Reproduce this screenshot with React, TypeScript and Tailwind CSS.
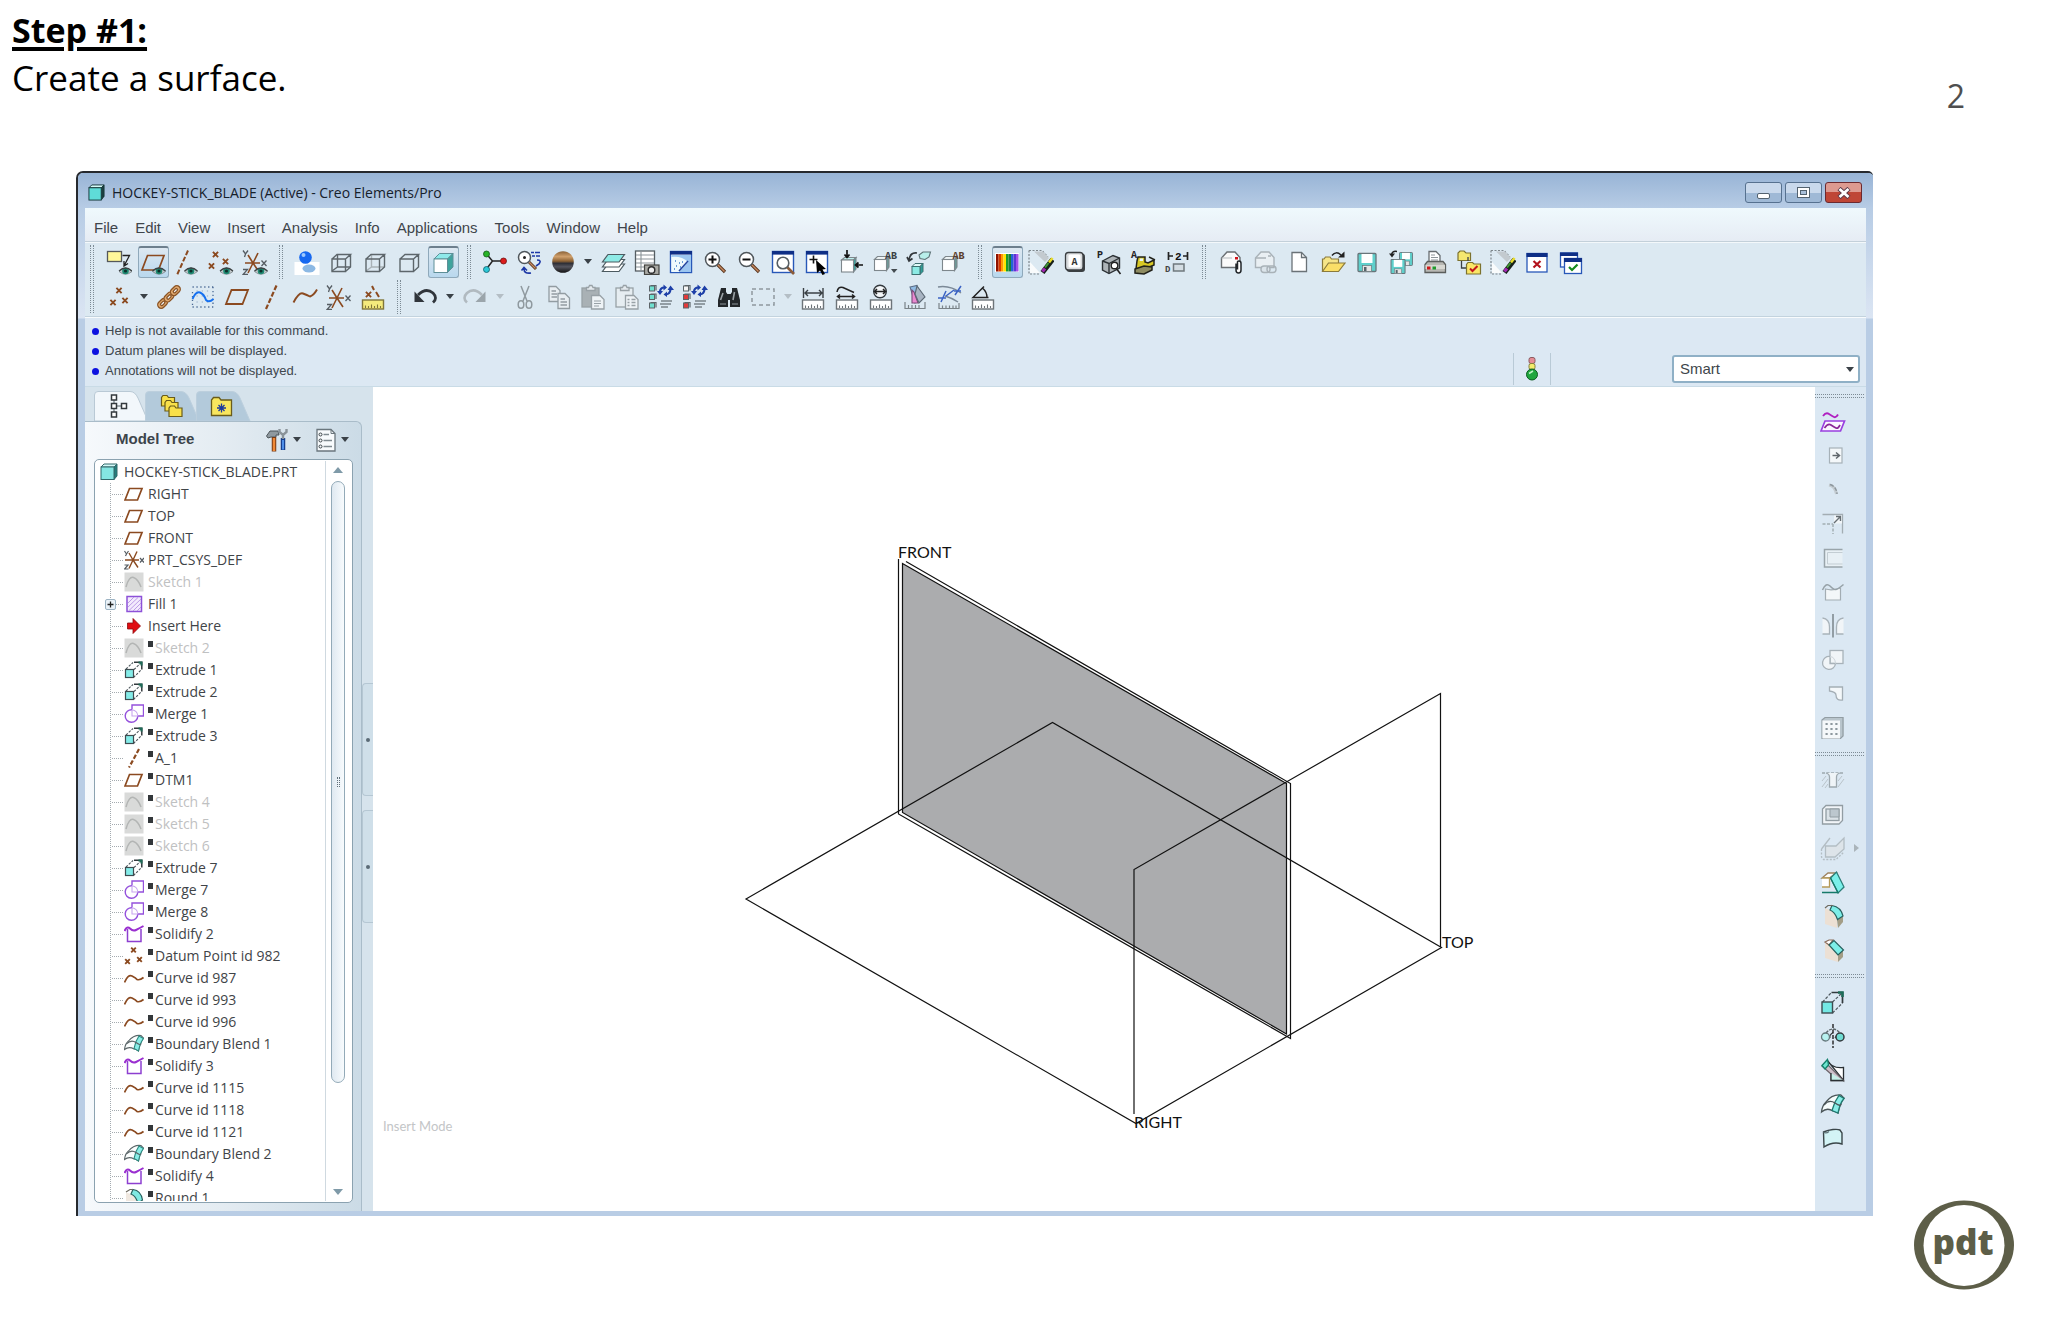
import React from "react";

type Kids = { children?: React.ReactNode };

const BROWN = "#8b4a20";
const GRAY = "#a3adb3";
const VIOLET = "#9a3fe0";

/* ---------- shared icon parts ---------- */

const Ico = ({ children }: Kids) => (
  <svg viewBox="0 0 26 26" className="h-[26px] w-[26px]" fill="none" aria-hidden="true">
    {children}
  </svg>
);

const TreeIco = ({ children }: Kids) => (
  <svg viewBox="0 0 20 20" className="h-5 w-5 shrink-0" fill="none" aria-hidden="true">
    {children}
  </svg>
);

const Eye = ({ x, y }: { x: number; y: number }) => (
  <g transform={`translate(${x} ${y})`}>
    <path d="M-6.5 0.5Q0 -6.5 6.5 0.5Q0 6 -6.5 0.5Z" fill="#c3c9cc" stroke="#7a8488" strokeWidth="0.8" />
    <circle r="3.3" fill="#1d8a72" />
    <circle r="1.6" fill="#0c2f2a" />
    <path d="M-6.5 0Q0 -6 6.5 0" stroke="#3c4244" strokeWidth="1.2" />
  </g>
);

const Cross = ({ x, y, r = 2.6 }: { x: number; y: number; r?: number }) => (
  <path d={`M${x - r} ${y - r}L${x + r} ${y + r}M${x + r} ${y - r}L${x - r} ${y + r}`} stroke={BROWN} strokeWidth="1.9" />
);

const Csys = () => (
  <g>
    <path d="M11 14H3M11 14H18M11 14L16 4M11 14L6 24M11 14L6 6M11 14L17 23" stroke={BROWN} strokeWidth="1.6" />
    <path d="M1 1.5L3.5 5L6 1.5M3.5 5L2.5 8M19.5 11.5L24.5 17M24.5 11.5L19.5 17M1 20.5H5.5L1 25.5H6" stroke="#555c62" strokeWidth="1.3" />
  </g>
);

const Ruler = ({ color = "#fff", stroke = "#6d7479" }: { color?: string; stroke?: string }) => (
  <g>
    <rect x="2.5" y="16" width="21" height="9" fill={color} stroke={stroke} strokeWidth="1.4" />
    <path d="M5.500 24V21.500M8.500 24V22M11.500 24V20.500M14.500 24V22M17.500 24V20.500M20.500 24V22" stroke={stroke} strokeWidth="1.1" />
  </g>
);

const Win = ({ children }: Kids) => (
  <g>
    <rect x="2.500" y="2.500" width="21" height="21" fill="#fff" stroke="#2858b8" strokeWidth="1.4" />
    <rect x="2" y="2" width="22" height="3.600" fill="#0f2f86" />
    {children}
  </g>
);

const WhiteCube = () => (
  <g stroke="#7e878c" strokeWidth="1.100">
    <path d="M2.500 10.500L5.500 7.500H17L14.500 10.500Z" fill="#eef4f6" />
    <path d="M14.500 10.500L17 7.500V18L14.500 21.500Z" fill="#6e9c98" />
    <rect x="2.500" y="10.500" width="12" height="11" fill="#fff" />
  </g>
);

const AquaCube = ({ x, y, s }: { x: number; y: number; s: number }) => (
  <g transform={`translate(${x} ${y})`} stroke="#3d6f70" strokeWidth="1">
    <path d={`M0 3L3 0H${s + 3}L${s} 3Z`} fill="#dffaf8" />
    <path d={`M${s} 3L${s + 3} 0V${s}L${s} ${s + 3}Z`} fill="#2c9d96" />
    <rect y="3" width={s} height={s} fill="#8ceae4" />
  </g>
);

const Lens = () => (
  <g>
    <path d="M15.500 15.500L23 23" stroke="#55321c" strokeWidth="3.200" />
    <path d="M15.500 15.500L22.500 22.500" stroke="#c98b62" strokeWidth="1.400" />
    <circle cx="10.500" cy="10.500" r="7" fill="#fff" stroke="#50575c" strokeWidth="1.500" />
  </g>
);

const Brush = () => (
  <g>
    <path d="M1 1.500H14L20 8M1 1.500V25H11" stroke="#7d868b" strokeWidth="1.200" strokeDasharray="2 1.500" />
    <path d="M6 2.500L17 13L21 9L15 2.500Z" fill="#c3cacf" />
    <path d="M2 13L12 24H2Z" fill="#f9fbfc" />
    <path d="M14.500 23.500L24.500 10.500" stroke="#17201a" strokeWidth="5" />
    <path d="M21 13.500L24.500 9" stroke="#e8dc2c" strokeWidth="2.600" />
    <path d="M17 18.500L20.500 14" stroke="#3f9b32" strokeWidth="2" />
    <path d="M14.500 22.500L17 19.500" stroke="#a327b4" strokeWidth="3.200" />
  </g>
);

const Floppy = ({ x, y, s }: { x: number; y: number; s: number }) => (
  <g transform={`translate(${x} ${y}) scale(${s})`}>
    <rect width="18" height="18" rx="1" fill="#5fd0cc" stroke="#68757a" strokeWidth="1.300" />
    <rect x="3.500" y="0.500" width="11" height="9" fill="#fff" />
    <rect x="4.500" y="12" width="9" height="6" fill="#e5e5e5" stroke="#68757a" strokeWidth="0.700" />
    <rect x="6" y="13.500" width="2.500" height="4" fill="#56646a" />
  </g>
);

const WireCube = ({ mode }: { mode: "wire" | "hidden" | "solid" }) => (
  <g stroke="#5d666b" strokeWidth="1.400">
    {mode !== "solid" && <path d="M9.500 5.500V18H22.500M9.500 18L4 22" stroke={mode === "wire" ? "#5d666b" : "#a9b2b7"} />}
    <path d="M4 10H17.500V22.500H4ZM4 10L9 5.500H22.500L17.500 10M22.500 5.500V18L17.500 22.500" />
  </g>
);

const TreeRefresh = ({ c }: { c: string }) => (
  <g>
    <g fill={c} stroke="#5c6468" strokeWidth="1">
      <rect x="1.500" y="2" width="5" height="5" fill={c === "#e23a3a" ? "#f4f4f4" : c} />
      <rect x="1.500" y="10.500" width="5" height="5" />
      <rect x="1.500" y="19" width="5" height="5" />
    </g>
    <path d="M2.500 1.500H8V6.500M2.500 10H8V15M2.500 18.500H8V23.500" stroke="#5c6468" strokeWidth="1.200" />
    <path d="M12 8Q12 3.500 16.500 3.500M22.500 5.500Q22 10 18 10.500" stroke="#1d3fa8" strokeWidth="2.200" />
    <path d="M9 7H15L12 11ZM19.500 6H26L22.500 1.500ZM15.500 0.500V6.500L19 3.500ZM19 7.500V13L15.500 10.500Z" fill="#1d3fa8" />
    <path d="M13 17H24M12 20H23M13 23H20" stroke="#7a848a" strokeWidth="1.300" />
  </g>
);

const Clip = ({ special }: { special?: boolean }) => (
  <g stroke="#98a1a6" strokeWidth="1.300">
    <rect x="2" y="4" width="17" height="19" fill={special ? "#e6edf1" : "#a9b1b5"} />
    <path d="M6.500 6.500V3.500H8.500L9.500 1.500H12L13 3.500H15V6.500Z" fill="#e4eaee" />
    <path d="M11.500 11.500H20L24 15.500V25H11.500Z" fill="#eef3f6" />
    {special ? <path d="M13.500 15.500H15.500M13.500 18.500H15.500M13.500 21.500H15.500M17.500 15.500H21.500M17.500 18.500H21.500M17.500 21.500H21.500" strokeWidth="1.600" /> : <path d="M14 17H21M14 19.500H21M14 22H19" strokeWidth="1" />}
  </g>
);

/* ---------- toolbar icon drawings ---------- */

const icons: Record<string, React.ReactNode> = {
  annotation: (
    <g>
      <rect x="1.500" y="2.500" width="14" height="10" fill="#fff79a" stroke="#55585a" strokeWidth="1.300" />
      <path d="M16.500 6.500H23.500L18.500 16M18 12V17L22 14.500" stroke="#222" strokeWidth="1.300" />
      <Eye x={19.500} y={22} />
    </g>
  ),
  planeEye: (
    <g>
      <path d="M7.500 6.500H24L18.500 21H2Z" stroke={BROWN} strokeWidth="1.700" />
      <Eye x={19} y={22} />
    </g>
  ),
  axisEye: (
    <g>
      <path d="M14 1.500L3 26" stroke={BROWN} strokeWidth="2" strokeDasharray="5 2" />
      <Eye x={17} y={22} />
    </g>
  ),
  pointEye: (
    <g>
      <Cross x={7.500} y={5.500} />
      <Cross x={3.500} y={17} />
      <Cross x={17.500} y={12.500} />
      <Eye x={18.500} y={22} />
    </g>
  ),
  csysEye: (
    <g>
      <Csys />
      <Eye x={19} y={22} />
    </g>
  ),
  spin: (
    <g>
      <rect x="0.500" y="13" width="25" height="13" fill="#fff" />
      <ellipse cx="15" cy="19.500" rx="6.500" ry="4" fill="#8db9e4" />
      <circle cx="11.500" cy="8.500" r="6.300" fill="#1668f0" />
      <circle cx="9.500" cy="6" r="2" fill="#9cc8ff" />
    </g>
  ),
  wire: <WireCube mode="wire" />,
  hidden: <WireCube mode="hidden" />,
  nohidden: <WireCube mode="solid" />,
  shaded: (
    <g stroke="#5f8f98" strokeWidth="1">
      <path d="M4 10L9.500 4.500H23L17.500 10Z" fill="#8ee9ea" />
      <path d="M17.500 10L23 4.500V18L17.500 23.500Z" fill="#3fa39d" />
      <rect x="4" y="10" width="13.500" height="13.500" fill="#fff" />
    </g>
  ),
  orient: (
    <g>
      <path d="M4.500 5L10.500 12L4.500 20M10.500 12H21" stroke="#222" strokeWidth="1.500" />
      <circle cx="4.500" cy="5" r="3" fill="#28b428" stroke="#14591a" strokeWidth="0.800" />
      <circle cx="21.500" cy="12" r="3" fill="#dc1c1c" stroke="#701010" strokeWidth="0.800" />
      <circle cx="4.500" cy="20.500" r="3" fill="#2cc8d8" stroke="#0e5d6a" strokeWidth="0.800" />
    </g>
  ),
  redraw: (
    <g>
      <path d="M13 13L20 20" stroke="#55321c" strokeWidth="3" />
      <path d="M13 13L19.500 19.500" stroke="#c98b62" strokeWidth="1.200" />
      <circle cx="8.500" cy="8.500" r="6" fill="#fff" stroke="#50575c" strokeWidth="1.500" />
      <circle cx="8.500" cy="8.500" r="1.500" fill="#222" />
      <path d="M15 3.500H18M19 3.500H24M16 7H19M20 7H24M21 11Q26 11 23 15L20 17M15 24Q8 25 8 20M5.500 21.500L8 18.500L11 21.500" stroke="#1c37a6" strokeWidth="1.600" />
    </g>
  ),
  sphere: (
    <g>
      <defs>
        <linearGradient id="ball" x1="0" y1="0" x2="0" y2="1">
          <stop offset="0" stopColor="#8a6238" />
          <stop offset="0.250" stopColor="#d0a06c" />
          <stop offset="0.460" stopColor="#8d6234" />
          <stop offset="0.560" stopColor="#2e2f36" />
          <stop offset="0.720" stopColor="#55555e" />
          <stop offset="1" stopColor="#111" />
        </linearGradient>
      </defs>
      <circle cx="13" cy="13" r="10.800" fill="url(#ball)" />
    </g>
  ),
  layers: (
    <g stroke="#4c5a60" strokeWidth="1.200">
      <path d="M8 15H24.500L19 22.500H2.500Z" fill="#fff" />
      <path d="M8 10.500H24.500L19 18H2.500Z" fill="#fff" />
      <path d="M8 5.500H24.500L19 13H2.500Z" fill="#8eeae6" />
    </g>
  ),
  views: (
    <g>
      <rect x="1.500" y="2" width="19" height="20" fill="#fff" stroke="#555d62" strokeWidth="1.300" />
      <path d="M2 6H20M2 10H20M2 14H20M2 18H20M7 2V22" stroke="#8b9499" strokeWidth="1.100" />
      <rect x="10.500" y="16" width="14.500" height="9.500" fill="#a9a9a4" stroke="#42423e" strokeWidth="1.200" />
      <circle cx="17.500" cy="21" r="3.300" fill="#efefef" stroke="#2c2c2c" strokeWidth="1.400" />
    </g>
  ),
  winFan: (
    <Win>
      <rect x="3.500" y="6" width="19.500" height="17" fill="#9cc6f0" />
      <path d="M3.500 8Q14 7 20 13L11 23H3.500Z" fill="#effafd" />
      <path d="M20 12L11 22" stroke="#23449e" strokeWidth="1.500" />
      <path d="M7 12H8M11 14H12M8 17H9M12 18H13M14 13H15M6 20H7" stroke="#3f7ec8" strokeWidth="1.300" />
    </Win>
  ),
  zoomIn: (
    <g>
      <Lens />
      <path d="M6.500 10.500H14.500M10.500 6.500V14.500" stroke="#111" strokeWidth="2" />
    </g>
  ),
  zoomOut: (
    <g>
      <Lens />
      <path d="M6.500 10.500H14.500" stroke="#111" strokeWidth="2" />
    </g>
  ),
  refit: (
    <Win>
      <path d="M17 18L24 25" stroke="#8a5a38" strokeWidth="2.600" />
      <circle cx="13" cy="14" r="5.800" stroke="#565e64" strokeWidth="1.600" />
    </Win>
  ),
  winCursor: (
    <Win>
      <path d="M9.500 6.500V14.500M5.500 10.500H13.500" stroke="#111" strokeWidth="1.600" />
      <path d="M12 11L22 20L18.500 20.500L21 25L18.500 26L16 21.500L13 24Z" fill="#000" />
    </Win>
  ),
  cubeArrows: (
    <g>
      <g stroke="#7e878c" strokeWidth="1.100">
        <path d="M3.500 11L6.500 8.500H18L15.500 11Z" fill="#bff2ef" />
        <path d="M15.500 11L18 8.500V20L15.500 23Z" fill="#3fa39d" />
        <rect x="3.500" y="11" width="12" height="12" fill="#fff" />
      </g>
      <path d="M9 1V8M6.500 5.500L9 8.500L11.500 5.500M25 16H18M20.500 13.500L17.500 16L20.500 18.500" stroke="#111" strokeWidth="1.700" />
    </g>
  ),
  cubeAB: (
    <g>
      <WhiteCube />
      <text x="13" y="10" fontSize="10" fontFamily="Liberation Mono" fontWeight="bold" fill="#3a3f44">AB</text>
      <path d="M19 20H25.500L22 24Z" fill="#444b50" />
    </g>
  ),
  cubeSwap: (
    <g>
      <AquaCube x={6} y={14.500} s={8} />
      <path d="M13 6L17 3H24.500L23 8L19 10.500L14 9.500Z" fill="#b8eeea" stroke="#5d7276" strokeWidth="1.100" />
      <path d="M11 4Q4 3 3 11M1 8L3 12L6.500 9.500" stroke="#33383c" strokeWidth="1.700" />
    </g>
  ),
  cubeAB2: (
    <g>
      <WhiteCube />
      <text x="12.500" y="10" fontSize="10" fontFamily="Liberation Mono" fontWeight="bold" fill="#5a3d2c">AB</text>
    </g>
  ),
  rainbow: (
    <g>
      <rect x="1" y="4" width="24" height="19" fill="#fff" />
      {["#8f1200", "#d83a00", "#ff9b00", "#ffe600", "#1c9a2a", "#17803a", "#2463d8", "#5b35d6", "#a452e8"].map((c, i) => (
        <rect key={c} x={2 + i * 2.500} y="5" width="2.500" height="17.500" fill={c} />
      ))}
    </g>
  ),
  brush: <Brush />,
  keyA: (
    <g>
      <rect x="4.500" y="4.500" width="18.500" height="18.500" rx="3" fill="#3b3f42" />
      <rect x="3.500" y="3.500" width="17.500" height="17.500" rx="3" fill="#d8dbdd" stroke="#3b3f42" strokeWidth="1.300" />
      <rect x="6.500" y="5.500" width="12" height="13" rx="1.500" fill="#fff" />
      <text x="9.500" y="15.500" fontSize="10" fontFamily="Liberation Mono" fontWeight="bold" fill="#333">A</text>
    </g>
  ),
  boxP: (
    <g>
      <text x="1" y="9" fontSize="10" fontFamily="Liberation Mono" fontWeight="bold" fill="#222">P</text>
      <path d="M6.500 12L17 6.500L23.500 9V19L13 24.500L6.500 21Z" fill="#aeb4b8" stroke="#2c3135" strokeWidth="1.400" />
      <path d="M6.500 12L13 14.500L23.500 9M13 14.500V24" stroke="#2c3135" strokeWidth="1.400" />
      <circle cx="18.500" cy="16.500" r="3.300" fill="#fff" stroke="#222" strokeWidth="1.400" />
      <path d="M20 19L24.500 25" stroke="#222" strokeWidth="1.600" />
    </g>
  ),
  dozerA: (
    <g>
      <text x="1" y="8.500" fontSize="10" fontFamily="Liberation Mono" fontWeight="bold" fill="#222">A</text>
      <path d="M8 8H15V13L18 14L24 11V16L15 20H6L7 12Z" fill="#d8c826" stroke="#22221a" strokeWidth="1.500" />
      <path d="M5 20L14 17L22 18V21L14 25L5 24Z" fill="#8f8c62" stroke="#22221a" strokeWidth="1.500" />
      <path d="M10 9.500H13V12H9.500Z" fill="#e9f7f5" />
      <path d="M19 8L25 11" stroke="#22221a" strokeWidth="1.500" />
    </g>
  ),
  dim2: (
    <g>
      <path d="M4.500 3V11M23.500 3V11M5 7H9M19 7H23" stroke="#222" strokeWidth="1.700" />
      <text x="11" y="10.500" fontSize="11" fontFamily="Liberation Mono" fontWeight="bold" fill="#111">2</text>
      <text x="1" y="23" fontSize="9" fontFamily="Liberation Mono" fontWeight="bold" fill="#444">D</text>
      <rect x="9.500" y="15" width="10.500" height="7" fill="#d4dde3" stroke="#6f787d" strokeWidth="1.500" />
    </g>
  ),
  mailClip: (
    <g>
      <path d="M3.500 9L9 3H17L22 8.500V18.500H3.500Z" fill="#fafafa" stroke="#6a6f73" strokeWidth="1.400" />
      <path d="M3.500 9H14" stroke="#b5babd" strokeWidth="1" />
      <rect x="17" y="8" width="3" height="2.500" fill="#d0121a" />
      <path d="M18 14.500V21Q18 24 20.500 24T23 21V14.500Q23 12 21 12T19.500 14V20.500" fill="#fff" stroke="#22262a" strokeWidth="1.500" />
    </g>
  ),
  mailLink: (
    <g stroke="#a9b2b8" strokeWidth="1.400">
      <path d="M3.500 9L9 3H17L22 8.500V18.500H3.500Z" fill="#e9eff3" />
      <path d="M16 7H19M4 9H14" />
      <rect x="9" y="17" width="9" height="6.500" rx="3" fill="#dbe4ea" />
      <rect x="15" y="17" width="9" height="6.500" rx="3" />
    </g>
  ),
  page: (
    <g stroke="#6a7277" strokeWidth="1.300">
      <path d="M6 3.500H15.500L20.500 8.500V22.500H6Z" fill="#fff" />
      <path d="M15.500 3.500V8.500H20.500" />
    </g>
  ),
  open: (
    <g>
      <path d="M2.500 22V10H4L5.500 8H10L11.500 10H18.500V14" fill="#f6e588" stroke="#8a7a3c" strokeWidth="1.200" />
      <path d="M2.500 22.500L8.500 14H25L18.500 22.500Z" fill="#fadf68" stroke="#8a7a3c" strokeWidth="1.200" />
      <path d="M12 6.500Q16 1.500 21 6" stroke="#222" strokeWidth="1.500" />
      <path d="M18 8.500H24.500V2.500Z" fill="#222" />
    </g>
  ),
  save: <Floppy x={4} y={4.500} s={1} />,
  saveCopy: (
    <g>
      <Floppy x={11.500} y={3.500} s={0.720} />
      <Floppy x={3} y={10.500} s={0.780} />
      <path d="M9 2.500Q4 1.500 3.500 6" stroke="#222" strokeWidth="1.500" />
      <path d="M1 4.500H7L4 8.500Z" fill="#222" />
    </g>
  ),
  print: (
    <g>
      <path d="M7 14V2.500H14L18 6.500V14" fill="#fff" stroke="#676d70" strokeWidth="1.300" />
      <path d="M9 6H13M9 8.500H16M9 11H16" stroke="#8d9498" strokeWidth="1" />
      <path d="M3 15.500L5.500 12.500H21L23.500 15.500V23.500H3Z" fill="#b9b9b4" stroke="#5b5e5c" strokeWidth="1.300" />
      <rect x="3.500" y="16" width="19.500" height="4" fill="#d8d8d2" />
      <rect x="5" y="17.500" width="3.500" height="3" fill="#cf1818" />
      <rect x="10.500" y="17.500" width="3.500" height="3" fill="#1f9a2c" />
    </g>
  ),
  folderCheck: (
    <g>
      <path d="M2 11.500V4L4 2H8L10 4H14.500V11.500Z" fill="#f5e770" stroke="#7c722e" strokeWidth="1.200" />
      <path d="M5.500 12V19H10M12 8V12" stroke="#3a4046" strokeWidth="1.300" />
      <path d="M10.500 25V15.500L12 13.500H16.500L18 15H24.500V25Z" fill="#fae668" stroke="#7c722e" strokeWidth="1.200" />
      <path d="M14 19.500L16.500 22L21.500 17" stroke="#c3161c" strokeWidth="2" />
    </g>
  ),
  winX: (
    <g>
      <rect x="3" y="4.500" width="20" height="18.500" fill="#fff" stroke="#2858b8" strokeWidth="1.300" />
      <rect x="2.500" y="4" width="21" height="4" fill="#0f2f86" />
      <path d="M9.500 12L16.500 18.500M16.500 12L9.500 18.500" stroke="#b3121c" strokeWidth="2.200" />
    </g>
  ),
  winCheck: (
    <g>
      <rect x="2.500" y="4" width="17" height="14" fill="#fff" stroke="#2858b8" strokeWidth="1.300" />
      <rect x="2" y="3.500" width="18" height="3.500" fill="#0f2f86" />
      <rect x="6.500" y="9.500" width="17" height="15" fill="#fff" stroke="#2858b8" strokeWidth="1.300" />
      <rect x="6" y="9" width="18" height="4" fill="#0f2f86" />
      <path d="M11 18L14 21L19.500 15.500" stroke="#158a1e" strokeWidth="2.200" />
    </g>
  ),
  points: (
    <g>
      <Cross x={13} y={6.500} />
      <Cross x={7} y={18.500} />
      <Cross x={19} y={16.500} />
    </g>
  ),
  chain: (
    <g stroke="#8a5426" strokeWidth="1.300">
      <g transform="rotate(-45 13 13)">
        <rect x="-1.500" y="9.500" width="11" height="7" rx="3.500" fill="#e2ab70" />
        <rect x="1.500" y="11.800" width="5" height="2.500" rx="1.200" fill="#eef4f8" />
        <rect x="7.500" y="9.500" width="11" height="7" rx="3.500" fill="#e2ab70" />
        <rect x="10.500" y="11.800" width="5" height="2.500" rx="1.200" fill="#eef4f8" />
        <rect x="16.500" y="9.500" width="11" height="7" rx="3.500" fill="#e2ab70" />
        <rect x="19.500" y="11.800" width="5" height="2.500" rx="1.200" fill="#eef4f8" />
      </g>
    </g>
  ),
  sketch: (
    <g>
      <path d="M2.500 3H24M2.500 23H24M2.500 8V22M23 3V22" stroke="#4b6a94" strokeWidth="1.300" strokeDasharray="1.300 2.600" />
      <path d="M6.500 7H22M6.500 12H22M6.500 18H22" stroke="#8fa7c4" strokeWidth="1.200" strokeDasharray="1.200 4" />
      <path d="M2.500 15Q6 7 10 8.500T16 16Q19 19 23.500 15" stroke="#1570f0" strokeWidth="1.900" />
    </g>
  ),
  plane: <path d="M7.500 6H24L18.500 20H2Z" stroke={BROWN} strokeWidth="1.800" />,
  axis: <path d="M18.500 1.500L8 25" stroke={BROWN} strokeWidth="2.200" strokeDasharray="5 2" />,
  curve: <path d="M1.500 18.500Q7 8 11 9.500T18 12.500Q22 11 25 5.500" stroke={BROWN} strokeWidth="1.900" />,
  csys: <Csys />,
  pointRuler: (
    <g>
      <Cross x={8.500} y={10.500} />
      <path d="M12 2L14 6M16 8L19 13" stroke={BROWN} strokeWidth="2" />
      <Ruler color="#f4ea7c" stroke="#80763a" />
    </g>
  ),
  undo: (
    <g>
      <path d="M6 11Q14 3 21 9Q26 14 21 18.500" stroke="#30353b" strokeWidth="2.800" />
      <path d="M2.500 7.500V18H12.500Z" fill="#30353b" />
    </g>
  ),
  redo: (
    <g>
      <path d="M20 11Q12 3 5 9Q0 14 5 18.500" stroke="#b1bac0" strokeWidth="2.600" />
      <path d="M23.500 7.500V18H13.500Z" fill="#9ba5ab" />
    </g>
  ),
  cut: (
    <g stroke="#8f999f" strokeWidth="1.500">
      <path d="M9 2L15 17M17 2L11 17" />
      <ellipse cx="9" cy="20.500" rx="2.800" ry="3.800" />
      <ellipse cx="17" cy="20.500" rx="2.800" ry="3.800" />
    </g>
  ),
  copy: (
    <g stroke="#929ca2" strokeWidth="1.300" fill="#e8eef2">
      <path d="M3 2.500H10L14 6.500V17.500H3Z" />
      <path d="M5.500 7H10M5.500 10H11M5.500 13H11" />
      <path d="M12 9.500H19L23.500 14V24.500H12Z" />
      <path d="M14.500 15H19M14.500 18H21M14.500 21H21" />
    </g>
  ),
  paste: <Clip />,
  pasteSpecial: <Clip special />,
  regen: <TreeRefresh c="#6fe0cf" />,
  regenRed: <TreeRefresh c="#e23a3a" />,
  find: (
    <g fill="#23272a">
      <path d="M5 4H10V8L12 11V23H2V16Z" />
      <path d="M21 4H16V8L14 11V23H24V16Z" />
      <rect x="11" y="10" width="4" height="6" />
      <path d="M4.500 16L7 9M17 16L18.500 8" stroke="#9ba2a6" strokeWidth="1.600" />
      <path d="M4 20H10M16 20H22" stroke="#6b7276" strokeWidth="1.300" />
    </g>
  ),
  box: <rect x="2" y="5" width="22" height="16" stroke="#8e989e" strokeWidth="1.500" strokeDasharray="4 3" />,
  mLen: (
    <g>
      <Ruler />
      <path d="M3.500 4V14M23 4V14M5 9H22M8 6L5 9L8 12M19 6L22 9L19 12" stroke="#3a4045" strokeWidth="1.400" />
    </g>
  ),
  mCurve: (
    <g>
      <Ruler />
      <path d="M3 8Q4 2 9 3.500L20 8.500M3 12.500H20M6 10.500L3.500 12.500L6 14.500M18 10.500L20.500 12.500L18 14.500" stroke="#222" strokeWidth="1.500" />
    </g>
  ),
  mDia: (
    <g>
      <Ruler />
      <circle cx="12" cy="7.500" r="6.300" fill="#f4f7f9" stroke="#33393e" strokeWidth="1.400" />
      <path d="M6 7.500H18M9 5L6.500 7.500L9 10M15 5L17.500 7.500L15 10" stroke="#222" strokeWidth="1.500" />
    </g>
  ),
  mArea: (
    <g>
      <path d="M3 18V24.500H23V18M6.500 24V21M10 24V21M13.500 24V21M17 24V21" stroke="#7a8388" strokeWidth="1.200" />
      <path d="M8 3L15 1.500L19 12L13 19Z" fill="#8fbbe4" stroke="#5b6e88" strokeWidth="1.100" />
      <path d="M10 6V19H16L12 8Z" fill="#e88ad0" stroke="#7a4a78" strokeWidth="1.100" />
      <path d="M15 2L23 13L17 19L13 10Z" fill="#a8b4c2" stroke="#5b6874" strokeWidth="1.100" />
    </g>
  ),
  mDraft: (
    <g>
      <path d="M3 19V24.500H23V19M6.500 24V21.500M10 24V21.500M13.500 24V21.500M17 24V21.500M20 24V21.500" stroke="#7a8388" strokeWidth="1.200" />
      <path d="M2 3Q14 1 25 9M9 12Q16 14 22 18" stroke="#7b8997" strokeWidth="1.500" />
      <path d="M2 14H10M5 18L10 7M18 7H25M19 11L25 2M10 12L18 6" stroke="#3b63c4" strokeWidth="1.500" />
    </g>
  ),
  mAngle: (
    <g>
      <Ruler />
      <path d="M14 2.500L3 13.500H18.500M12.500 4Q17 8 17 13.500" stroke="#222" strokeWidth="1.500" />
    </g>
  ),
  /* feature toolbar */
  style: (
    <g stroke={VIOLET} strokeWidth="1.700">
      <path d="M3 7Q6 3 9 5T14 8T18 5.500" stroke="#b01fc0" strokeWidth="1.900" />
      <path d="M5 12H24.500L20.500 22H1Z" fill="#fbf6ff" />
      <path d="M4.500 19Q8 14 11 16T16 19T20 16" stroke="#8b2797" />
    </g>
  ),
  insertPage: (
    <g>
      <rect x="9.500" y="5" width="12.500" height="15" fill="#f4f8fa" stroke="#a6b1b8" strokeWidth="1.200" />
      <path d="M12.500 12.500H19M16 9.500L19.500 12.500L16 15.500" stroke="#60676c" strokeWidth="1.500" />
    </g>
  ),
  arc: (
    <g>
      <path d="M9 8Q15 9 16.500 17" stroke="#c3cbd0" strokeWidth="3" />
      <path d="M10 7.500Q16.500 9.500 17 17" stroke="#8d979d" strokeWidth="1.400" strokeDasharray="4 1.500" />
    </g>
  ),
  extend: (
    <g>
      <path d="M2.500 3.500H22.500V22.500" stroke={GRAY} strokeWidth="1.300" />
      <rect x="14" y="4.500" width="8" height="8" fill="#f1f5f8" />
      <path d="M2.500 13H13M13 13V23" stroke={GRAY} strokeWidth="1.500" strokeDasharray="3 1.500" />
      <path d="M14 12L20.500 5.500M16 5.500H20.500V10" stroke="#666e73" strokeWidth="1.400" />
    </g>
  ),
  offset: (
    <g stroke="#99a4aa" strokeWidth="1.500">
      <rect x="5" y="5" width="17.500" height="17" fill="#e8f0f5" stroke="none" />
      <path d="M22.500 4.500H4.500V22H22.500" />
      <path d="M22.500 7.500H7.500V19H22.500" stroke="#c3cdd3" strokeWidth="1" />
    </g>
  ),
  solidifyG: (
    <g stroke="#96a1a7" strokeWidth="1.500">
      <path d="M5.500 10Q12 12 20.500 9V21H5.500Z" fill="#f3f7f9" stroke={GRAY} strokeWidth="1.200" />
      <path d="M2.500 11Q6 3 10 7T16 10.500T23.500 5.500" />
    </g>
  ),
  mirror: (
    <g>
      <path d="M2.500 5Q9.500 6 9.500 14V21H2.500M23.500 5Q16.500 6 16.500 14V21H23.500" fill="#f1f5f8" stroke="#a8b2b9" strokeWidth="1.300" />
      <path d="M13 1V24.500" stroke="#7a848a" strokeWidth="1.500" />
    </g>
  ),
  mergeG: (
    <g stroke="#a8b2b9" strokeWidth="1.300" fill="#f1f5f8">
      <rect x="10" y="3.500" width="13" height="13" />
      <path d="M10 9.500A6.500 6.500 0 1 0 15.500 16.500H10Z" />
      <path d="M10 9.500Q15 10 15.500 16.500" stroke="#ccd4d9" strokeWidth="1" />
    </g>
  ),
  trim: <path d="M9.500 6H22.500V19Q16 20 16 14Q16 11 9.500 10Z" fill="#f4f8fa" stroke="#a4aeb5" strokeWidth="1.300" />,
  pattern: (
    <g>
      <path d="M2 5L6 2H23.500V21L20 24Z" fill="#b9c5cc" />
      <path d="M2 5L5 2.500H23V21L20.500 23.500H2Z" stroke="#929da3" strokeWidth="1.200" />
      <rect x="2.500" y="5.500" width="17.500" height="18" fill="#f5f8fa" />
      <path d="M5.500 9H18M5.500 14H18M5.500 19H18" stroke="#8d989e" strokeWidth="2.200" strokeDasharray="2.200 2.700" />
    </g>
  ),
  hole: (
    <g stroke="#9da8ae" strokeWidth="1.300">
      <path d="M2 6H24" strokeDasharray="3 1.500" />
      <path d="M6 6Q9.500 7 9.500 10V20H16.500V10Q16.500 7 20 6" fill="#eff4f7" />
      <path d="M2 20L8 12M5 21L8 17M2 14L6 9M18 20L24 12M18 14L22 9" stroke="#b9c3c9" strokeWidth="1" />
    </g>
  ),
  shell: (
    <g stroke="#929da3" strokeWidth="1.300">
      <path d="M2.500 8L6 4.500H22.500V19.500L19 23H2.500Z" fill="#f1f5f8" />
      <rect x="6" y="8" width="13" height="11.500" fill="#dbe3e8" />
      <path d="M10 8V16H19V8Z" fill="#bcc7ce" strokeWidth="1" />
    </g>
  ),
  rib: (
    <g stroke="#b3bdc3" strokeWidth="1.300">
      <path d="M1.500 14L10 3M5.500 11H16L24 3V14L15 22H5.500Z" fill="#dde4e9" />
      <path d="M1.500 14V22L3.500 24.500H16L24 17" strokeDasharray="2 1.500" />
    </g>
  ),
  draft: (
    <g strokeWidth="1.300">
      <path d="M2 9L8 4H16L9.500 9Z" fill="#fff" stroke="#9c8260" />
      <path d="M2 9H9.500V18H2" fill="#fff" stroke="#b59a58" />
      <path d="M10.500 9L16.500 3L24 18L18 24Z" fill="#7af0ea" stroke="#2b7d78" />
      <path d="M2 23.500H18L10.500 9" stroke="#167a6a" />
    </g>
  ),
  round: (
    <g strokeWidth="1.200">
      <path d="M5 5Q16 8 17 17V25L5 21Z" fill="#ece0d4" />
      <path d="M17 17L23 13V19L18 25Z" fill="#a39d86" />
      <path d="M10 7L12 2.500Q21 4 23 13L17.500 16.500Q15 9 10 7Z" fill="#7ceee8" stroke="#28605e" />
      <path d="M5 5L8 2.500H13" stroke="#6d6a60" />
    </g>
  ),
  chamfer: (
    <g strokeWidth="1.200">
      <path d="M5 6L8 7L18 18V25L5 21Z" fill="#ece0d4" />
      <path d="M18 18L23 13V20L18 25Z" fill="#a39d86" />
      <path d="M5 5L9 3H13L9 8Z" fill="#fff" stroke="#8a6a58" />
      <path d="M9 8L14 3.500L23.500 13L18 18Z" fill="#7ceee8" stroke="#28605e" />
    </g>
  ),
  extrude: (
    <g>
      <path d="M2.500 13L11 4M12.500 13L22 4M12.500 24L22.500 14" stroke="#4d575c" strokeWidth="1.200" strokeDasharray="3 1.500" />
      <path d="M11.500 3.500H22.500V14" stroke="#33393d" strokeWidth="1.700" />
      <path d="M18 3.500H22.500V8" stroke="#1d6c58" strokeWidth="2.600" />
      <rect x="2" y="13" width="10.500" height="11" fill="#74e8e4" stroke="#3e4c50" strokeWidth="1.400" />
    </g>
  ),
  revolve: (
    <g>
      <path d="M6 10Q13 2 20 10" stroke="#5d676c" strokeWidth="1.400" strokeDasharray="3 1.200" />
      <path d="M10 15Q9 12 13 9.500M15 15L17 12" stroke="#33393d" strokeWidth="1.200" />
      <circle cx="5.500" cy="14" r="4" fill="#b8f2f0" stroke="#66787c" strokeWidth="1.300" />
      <circle cx="20" cy="14" r="4" fill="#6fdcd2" stroke="#33393d" strokeWidth="1.500" />
      <path d="M13 1V25" stroke="#222" strokeWidth="1.400" strokeDasharray="4 1.500" />
    </g>
  ),
  sweep: (
    <g strokeWidth="1.300">
      <path d="M7 3Q12 12 23.500 10.500V23.500Z" fill="#fff" stroke="#2a3033" />
      <path d="M2 9L11 17V23.500H23.500L6 6Z" fill="#cdbfc9" stroke="#6d646a" />
      <path d="M2 8.500L7.500 2.500L8.500 8L5 12Z" fill="#6ee4d0" stroke="#13816c" />
      <path d="M11 16V23.500H23.500" fill="#c6efe8" stroke="#2a3033" />
    </g>
  ),
  boundary: (
    <g strokeWidth="1.300">
      <path d="M6 11Q12 3 21 4L24 7Q20 12 18 22Q15 20 13 20Q7 16 1.500 21Q2 15 6 11Z" fill="#f6fcfc" stroke="#4b5659" />
      <path d="M15 11L19 4.500L24 7.500Q20 12 18 22L12 19.500Z" fill="#8aeee8" stroke="#1f7a70" />
      <path d="M4 14Q9 8 15 12T21 13" stroke="#4b5659" />
    </g>
  ),
  fillSurf: (
    <g>
      <path d="M3.500 7Q8 5 13 4.500T20 5L22 8V19Q13 16 4 22Z" fill="#d3f4f6" stroke="#3b4649" strokeWidth="1.400" />
      <path d="M3.500 7Q6 9 9 6.500" stroke="#5f7378" strokeWidth="1.100" />
    </g>
  ),
};

/* ---------- tree icons ---------- */

const treeIcons: Record<string, React.ReactNode> = {
  plane: <path d="M5.500 4.500H18L13.500 16H1Z" stroke={BROWN} strokeWidth="1.700" />,
  csys: (
    <g>
      <path d="M9 10H1M9 10H15M9 10L13 1.500M9 10L5 18.500M9 10L5 3M9 10L14 17.500" stroke={BROWN} strokeWidth="1.400" />
      <path d="M0.500 1L2.500 4L4.500 1M2.500 4L1.500 6M16 8L20 12.500M20 8L16 12.500M0.500 15H4L0.500 19H4.500" stroke="#555c62" strokeWidth="1.200" />
    </g>
  ),
  sketch: (
    <g>
      <rect x="0.500" y="0.500" width="19" height="19" fill="#d9dad9" />
      <path d="M2 15Q5 4 9.500 5.500T17 15" stroke="#b3b5b4" strokeWidth="1.500" />
    </g>
  ),
  fill: (
    <g>
      <rect x="3" y="2.500" width="14.500" height="15" fill="#f3ebfd" stroke="#8d51d8" strokeWidth="1.500" />
      <path d="M4 9L10 3M4 13L14 3.500M5 16.500L17 5M9 17L17 9M13 17L17 13" stroke="#b692e4" strokeWidth="0.900" />
    </g>
  ),
  arrow: <path d="M3.500 7H9V2.500L16.500 10L9 17.500V13H3.500Z" fill="#e00d12" stroke="#8d0a0d" strokeWidth="0.800" />,
  extrude: (
    <g>
      <path d="M2 9L9 2.500M10 9.500L17 3M9.500 17.500L17.500 9.500" stroke="#4d575c" strokeWidth="1.100" strokeDasharray="2.500 1.300" />
      <path d="M10 2.200H17.800V9.500" stroke="#33393d" strokeWidth="1.500" />
      <path d="M14.500 2.500H17.500V5.500" stroke="#1d6c58" strokeWidth="2" />
      <rect x="1.500" y="9.500" width="8" height="8" fill="#84ece8" stroke="#3e4c50" strokeWidth="1.200" />
    </g>
  ),
  merge: (
    <g stroke="#9450dc" strokeWidth="1.400">
      <path d="M8 5.500V1H19.500V12H14" />
      <path d="M8 5.700A6.300 6.300 0 1 0 13.800 12" />
      <path d="M8 5.700V12H13.800Q13.500 6.500 8 5.700" stroke="#c8a6ee" strokeWidth="1.100" />
    </g>
  ),
  axis: <path d="M15 1L5 19.500" stroke={BROWN} strokeWidth="2.200" strokeDasharray="4.500 2" />,
  solidify: (
    <g stroke="#9a2fd0" strokeWidth="1.500">
      <path d="M3.500 5V17.500H17V5" stroke="#8d3fd0" />
      <path d="M0.500 7Q3 1.500 6 4.500T12 6T19.500 2" strokeWidth="2" />
    </g>
  ),
  points: (
    <g>
      <Cross x={9.500} y={4} r={2.300} />
      <Cross x={3.500} y={15.500} r={2.300} />
      <Cross x={15.500} y={13.500} r={2.300} />
    </g>
  ),
  curve: <path d="M0.500 14.500Q4 6 8 8T13 11.500Q16 12.500 19.500 9.500" stroke={BROWN} strokeWidth="1.700" />,
  boundary: (
    <g strokeWidth="1.100">
      <path d="M4.500 7Q10 0.500 17 1.500L19.500 4Q16 9 14.500 17Q12 15 10 15Q5 12 0.500 15.500Q1 10 4.500 7Z" fill="#fafdfd" stroke="#5b6669" />
      <path d="M12 7.500L15 2L19.500 4.500Q16 9 14.500 17L10 14.500Z" fill="#8aeee8" stroke="#2b8a80" />
      <path d="M2.500 10Q7 5 12 8.500T17 9.500" stroke="#5b6669" />
    </g>
  ),
  round: (
    <g strokeWidth="1.200">
      <path d="M2 4.500Q12 7 13 15V20L2 18Z" fill="#f0e8e0" />
      <path d="M7 6L9 1.500Q17 2.500 18.500 12L14 15.500Q12 8 7 6Z" fill="#7fe8e2" stroke="#28605e" />
      <path d="M2 4L6 1.500H9" stroke="#6d6a60" />
    </g>
  ),
};

const rows: { icon: string; text: string; mark?: boolean; dim?: boolean; plus?: boolean }[] = [
  { icon: "plane", text: "RIGHT" },
  { icon: "plane", text: "TOP" },
  { icon: "plane", text: "FRONT" },
  { icon: "csys", text: "PRT_CSYS_DEF" },
  { icon: "sketch", text: "Sketch 1", dim: true },
  { icon: "fill", text: "Fill 1", plus: true },
  { icon: "arrow", text: "Insert Here" },
  { icon: "sketch", text: "Sketch 2", mark: true, dim: true },
  { icon: "extrude", text: "Extrude 1", mark: true },
  { icon: "extrude", text: "Extrude 2", mark: true },
  { icon: "merge", text: "Merge 1", mark: true },
  { icon: "extrude", text: "Extrude 3", mark: true },
  { icon: "axis", text: "A_1", mark: true },
  { icon: "plane", text: "DTM1", mark: true },
  { icon: "sketch", text: "Sketch 4", mark: true, dim: true },
  { icon: "sketch", text: "Sketch 5", mark: true, dim: true },
  { icon: "sketch", text: "Sketch 6", mark: true, dim: true },
  { icon: "extrude", text: "Extrude 7", mark: true },
  { icon: "merge", text: "Merge 7", mark: true },
  { icon: "merge", text: "Merge 8", mark: true },
  { icon: "solidify", text: "Solidify 2", mark: true },
  { icon: "points", text: "Datum Point id 982", mark: true },
  { icon: "curve", text: "Curve id 987", mark: true },
  { icon: "curve", text: "Curve id 993", mark: true },
  { icon: "curve", text: "Curve id 996", mark: true },
  { icon: "boundary", text: "Boundary Blend 1", mark: true },
  { icon: "solidify", text: "Solidify 3", mark: true },
  { icon: "curve", text: "Curve id 1115", mark: true },
  { icon: "curve", text: "Curve id 1118", mark: true },
  { icon: "curve", text: "Curve id 1121", mark: true },
  { icon: "boundary", text: "Boundary Blend 2", mark: true },
  { icon: "solidify", text: "Solidify 4", mark: true },
  { icon: "round", text: "Round 1", mark: true },
];

/* ---------- toolbars ---------- */

type Tool = { i: string; label: string; on?: boolean };
type Item = Tool | "sep" | "wideSep" | "menu" | "menuOff";
const t = (i: string, label: string, on?: boolean): Tool => ({ i, label, on });

const row1: Item[] = [
  t("annotation", "Annotation display"), t("planeEye", "Plane display", true), t("axisEye", "Axis display"), t("pointEye", "Point display"), t("csysEye", "Coordinate system display"),
  "sep",
  t("spin", "Spin center"), t("wire", "Wireframe"), t("hidden", "Hidden line"), t("nohidden", "No hidden"), t("shaded", "Shading", true),
  "sep",
  t("orient", "Reorient"), t("redraw", "Repaint"), t("sphere", "Appearance gallery"), "menu", t("layers", "Layers"), t("views", "View manager"), t("winFan", "Orient mode"), t("zoomIn", "Zoom in"), t("zoomOut", "Zoom out"), t("refit", "Refit"), t("winCursor", "Saved views"), t("cubeArrows", "Explode"), t("cubeAB", "Named view"), t("cubeSwap", "Swap view"), t("cubeAB2", "View names"),
  "wideSep",
  t("rainbow", "Color effects", true), t("brush", "Erase display"), t("keyA", "Annotation"), t("boxP", "Part view"), t("dozerA", "Assembly view"), t("dim2", "Dimensions"),
  "wideSep",
  t("mailClip", "Send attachment"), t("mailLink", "Send link"), t("page", "New"), t("open", "Open"), t("save", "Save"), t("saveCopy", "Save a copy"), t("print", "Print"), t("folderCheck", "Working directory"), t("brush", "Erase not displayed"), t("winX", "Close window"), t("winCheck", "Activate window"),
];

const row2: Item[] = [
  t("points", "Datum point"), "menu", t("chain", "Reference"), t("sketch", "Sketch"), t("plane", "Datum plane"), t("axis", "Datum axis"), t("curve", "Datum curve"), t("csys", "Coordinate system"), t("pointRuler", "Analysis point"),
  "sep",
  t("undo", "Undo"), "menu", t("redo", "Redo"), "menuOff", t("cut", "Cut"), t("copy", "Copy"), t("paste", "Paste"), t("pasteSpecial", "Paste special"), t("regen", "Regenerate"), t("regenRed", "Regenerate manager"), t("find", "Find"), t("box", "Select box"), "menuOff",
  t("mLen", "Distance"), t("mCurve", "Length"), t("mDia", "Diameter"), t("mArea", "Area"), t("mDraft", "Curvature"), t("mAngle", "Angle"),
];

const side: Tool[][] = [
  [t("style", "Style"), t("insertPage", "Copy geometry"), t("arc", "Wrap"), t("extend", "Extend"), t("offset", "Offset"), t("solidifyG", "Solidify"), t("mirror", "Mirror"), t("mergeG", "Merge"), t("trim", "Trim"), t("pattern", "Pattern")],
  [t("hole", "Hole"), t("shell", "Shell"), t("rib", "Rib"), t("draft", "Draft"), t("round", "Round"), t("chamfer", "Chamfer")],
  [t("extrude", "Extrude"), t("revolve", "Revolve"), t("sweep", "Sweep"), t("boundary", "Boundary blend"), t("fillSurf", "Fill")],
];

const Down = ({ off }: { off?: boolean }) => (
  <svg viewBox="0 0 8 5" className="h-[5px] w-2" aria-hidden="true">
    <path d="M0 0H8L4 5Z" fill={off ? "#b4bec5" : "#3a4147"} />
  </svg>
);

const Bar = ({ items }: { items: Item[] }) => (
  <div className="flex h-[35px] items-center">
    {items.map((it, n) => {
      if (it === "sep") return <span key={n} className="mx-[7px] h-[34px] w-1 shrink-0 border-x border-dotted border-[#7d8b95]" />;
      if (it === "wideSep") return <span key={n} className="mx-2 h-[34px] w-1 shrink-0 border-x border-dotted border-[#7d8b95]" />;
      if (it === "menu" || it === "menuOff")
        return (
          <button key={n} type="button" aria-label="More options" className="flex h-8 w-4 shrink-0 items-center justify-center">
            <Down off={it === "menuOff"} />
          </button>
        );
      return (
        <button key={n} type="button" aria-label={it.label} className="flex h-8 w-[34px] shrink-0 items-center justify-center">
          {it.on ? (
            <span className="flex h-8 w-[31px] items-center justify-center rounded-[3px] border border-t-2 border-[#8fa9bb] border-t-[#6d7f8d] bg-linear-to-b from-[#dde8f1] to-[#b9d8ee]">
              <Ico>{icons[it.i]}</Ico>
            </span>
          ) : (
            <Ico>{icons[it.i]}</Ico>
          )}
        </button>
      );
    })}
  </div>
);

const Tab = ({ on, label, children }: Kids & { on?: boolean; label: string }) => (
  <button type="button" aria-label={label} className="relative flex h-[30px] w-[51px] items-center justify-center">
    <svg viewBox="0 0 56 30" className="absolute top-0 left-0 h-[30px] w-14" aria-hidden="true">
      <path d="M0.500 30V4Q0.500 0.500 4 0.500H36Q41 0.500 44 7L54 30Z" fill={on ? "#f2f7fb" : "#b3cadb"} stroke={on ? "#b9c9d5" : "#bccfdd"} />
    </svg>
    <span className="relative">{children}</span>
  </button>
);

const Folder = ({ x, y }: { x: number; y: number }) => (
  <path transform={`translate(${x} ${y})`} d="M0.500 11V2.500L2 0.500H6L7.500 2.500H13.500V11Z" fill="#f8e04a" stroke="#6a5c1a" strokeWidth="1.200" />
);

const SplitHandle = () => (
  <button type="button" aria-label="Collapse panel" className="flex h-[113px] w-[11px] items-center justify-center rounded-l-[4px] border border-r-0 border-[#b5c7d3] bg-[#cfdfe9]">
    <span className="h-1 w-1 rounded-full bg-[#5b6b76]" />
  </button>
);

const ModelPanel = () => (
  <aside className="flex w-[288px] shrink-0 bg-[#d6e3ec]">
    <div className="flex min-w-0 flex-1 flex-col">
      <div className="flex h-[34px] items-end pl-[9px]">
        <Tab on label="Model Tree">
          <svg viewBox="0 0 20 24" className="h-6 w-5" fill="#fff" stroke="#33393d" strokeWidth="1.500" aria-hidden="true">
            <path d="M4 6V18M7 12H13" stroke="#8b959b" />
            <rect x="1.500" y="1" width="5" height="5" />
            <rect x="1.500" y="9.500" width="5" height="5" />
            <rect x="1.500" y="18" width="5" height="5" />
            <rect x="11.500" y="9.500" width="5" height="5" />
          </svg>
        </Tab>
        <Tab label="Folder Browser">
          <svg viewBox="0 0 24 24" className="h-6 w-6" fill="none" aria-hidden="true">
            <Folder x={2} y={1} />
            <Folder x={5.500} y={6} />
            <Folder x={9.500} y={11.500} />
          </svg>
        </Tab>
        <Tab label="Favorites">
          <svg viewBox="0 0 24 24" className="h-6 w-6" fill="none" aria-hidden="true">
            <path d="M1.500 21.500V6L3.500 3.500H9L11 6H21.500V21.500Z" fill="#f8e65e" stroke="#6a5c1a" strokeWidth="1.300" />
            <path d="M11.500 9.500V18.500M7 14H16M8.500 11L14.500 17M14.500 11L8.500 17" stroke="#1c3a9c" strokeWidth="1.300" />
          </svg>
        </Tab>
      </div>
      <div className="flex min-h-0 flex-1 flex-col rounded-tr-md border-t border-r border-[#a9bcc9] bg-linear-to-r from-[#f6f9fc] via-[#e4ecf2] to-[#cbdbe6] pb-2 pl-[9px] pr-2">
        <div className="flex h-[37px] shrink-0 items-center pr-1 pb-0.5 pl-[22px]">
          <h2 className="flex-1 font-['Liberation_Sans'] text-[15px] font-bold text-[#3c444b]">Model Tree</h2>
          <button type="button" aria-label="Settings" className="mr-3.5 flex items-center gap-1">
            <svg viewBox="0 0 24 26" className="h-[26px] w-6" fill="none" aria-hidden="true">
              <path d="M1.500 9L5 4H13L14 8H11V10H6L3 11Z" fill="#8f999f" stroke="#4c555a" />
              <path d="M9 10V24.500" stroke="#7a3d17" strokeWidth="4.500" />
              <path d="M9 11V24" stroke="#f08a38" strokeWidth="2.400" />
              <path d="M18 11V23" stroke="#163e8e" strokeWidth="4.500" />
              <path d="M18 13V22.500" stroke="#4f8fe8" strokeWidth="2" />
              <path d="M14.500 2V5L18 8L21.500 5V2M18 8V12" stroke="#8a9399" strokeWidth="2.400" />
            </svg>
            <Down />
          </button>
          <button type="button" aria-label="Show" className="flex items-center gap-1">
            <svg viewBox="0 0 22 26" className="h-[26px] w-[22px]" fill="none" aria-hidden="true">
              <path d="M2 2.500H16L20 6.500V24H2Z" fill="#f8fbfd" stroke="#6a767d" strokeWidth="1.300" />
              <path d="M16 2.500V6.500H20" stroke="#6a767d" />
              <path d="M8.500 7.500H14M8.500 13.500H17M8.500 19.500H17" stroke="#7f8a90" strokeWidth="1.300" />
              <circle cx="5.500" cy="7.500" r="1.500" stroke="#3a4246" />
              <circle cx="5.500" cy="13.500" r="1.500" stroke="#3a4246" />
              <circle cx="5.500" cy="19.500" r="1.500" stroke="#3a4246" />
            </svg>
            <Down />
          </button>
        </div>
        <div className="flex min-h-0 flex-1 overflow-hidden rounded-[5px] border border-[#8ba2b0] bg-white py-px">
          <ul className="min-w-0 flex-1 overflow-hidden border-r border-[#cfd9e0] font-['Open_Sans'] text-sm whitespace-pre text-[#3f4448]">
            <li className="flex h-[22px] items-center pl-[5px]">
              <svg viewBox="0 0 18 18" className="h-[18px] w-[18px] shrink-0" aria-hidden="true">
                <path d="M1 4L4 1H17L14 4Z" fill="#d5faf8" stroke="#33696b" />
                <path d="M14 4L17 1V13L14 16.500Z" fill="#247d7b" stroke="#33696b" />
                <rect x="1" y="4" width="13" height="12.500" fill="#85e6e2" stroke="#33696b" />
              </svg>
              <span className="pl-1.5">HOCKEY-STICK_BLADE.PRT</span>
            </li>
            {rows.map((r) => (
              <li key={r.text} className="flex h-[22px] items-center">
                <svg viewBox="0 0 29 22" className="h-[22px] w-[29px] shrink-0" fill="none" aria-hidden="true">
                  <path d="M15.500 0V22M17 11.500H28" stroke="#a4abb0" strokeDasharray="1 1" />
                  {r.plus && (
                    <g>
                      <rect x="10.500" y="6.500" width="10" height="10" rx="1.500" fill="#eaf2f8" stroke="#9db4c4" />
                      <path d="M12.500 11.500H18.500M15.500 8.500V14.500" stroke="#222" strokeWidth="1.300" />
                    </g>
                  )}
                </svg>
                <TreeIco>{treeIcons[r.icon]}</TreeIco>
                {r.mark && <span className="mb-2 ml-1 h-[6px] w-[5px] bg-[#33373a]" />}
                <span className={r.dim ? (r.mark ? "pl-0.5 text-[#bfc1c2]" : "pl-1 text-[#bfc1c2]") : r.mark ? "pl-0.5" : "pl-1"}>{r.text}</span>
              </li>
            ))}
          </ul>
          <div className="flex w-[26px] shrink-0 flex-col items-center py-1.5 pr-0.5">
            <svg viewBox="0 0 10 6" className="h-1.5 w-2.5" aria-hidden="true"><path d="M0 6H10L5 0Z" fill="#7f9aa8" /></svg>
            <div className="mt-2 flex min-h-0 w-[14px] flex-1 flex-col">
              <div className="flex h-[85%] items-center justify-center rounded-full border border-[#93aab8] bg-linear-to-r from-[#dfe9f1] to-[#f8fbfd]">
                <span className="h-2.5 w-[3px] border-x border-dotted border-[#5f6f7a]" />
              </div>
            </div>
            <svg viewBox="0 0 10 6" className="h-1.5 w-2.5" aria-hidden="true"><path d="M0 0H10L5 6Z" fill="#7f9aa8" /></svg>
          </div>
        </div>
      </div>
    </div>
    <div className="flex w-[11px] flex-col justify-center gap-3.5 pt-2">
      <SplitHandle />
      <SplitHandle />
    </div>
  </aside>
);

const Viewport = () => (
  <main className="relative min-w-0 flex-1 bg-white">
    <svg viewBox="373 387 1442 824" className="absolute inset-0 h-full w-full" fill="none" stroke="#111" strokeWidth="1.200" aria-label="Datum planes">
      <path d="M902.500 563.500L1286.500 783.500V1034L902.500 812.500Z" fill="#abacae" />
      <path d="M906 561.500L1290.500 783.500V1038.500L898.500 814V559" />
      <path d="M746 899L1052.500 722.500L1441.500 947.500L1136 1123.500Z" />
      <path d="M1134 1114V869.500L1440.500 693.500V947" />
      <g fill="#111" stroke="none" fontFamily="Lato" fontSize="16">
        <text x="898" y="558">FRONT</text>
        <text x="1442" y="948">TOP</text>
        <text x="1134" y="1128">RIGHT</text>
      </g>
    </svg>
    <span className="absolute bottom-[75px] left-2.5 font-['Lato'] text-[13px] leading-5 text-[#c3c5c7]">Insert Mode</span>
  </main>
);

const FeatureBar = () => (
  <nav aria-label="Features" className="w-[51px] shrink-0 bg-[#dbe8f3] pr-0.5">
    {side.map((group, n) => (
      <div key={n}>
        <div className="flex h-[18px] items-center">
          <span className="h-1 w-full border-y border-dotted border-[#7d8b95]" />
        </div>
        {group.map((f) => (
          <div key={f.i} className="flex h-[34px] items-center pl-[5px]">
            <button type="button" aria-label={f.label}><Ico>{icons[f.i]}</Ico></button>
            {f.i === "rib" && (
              <svg viewBox="0 0 5 8" className="ml-2 h-2 w-[5px]" aria-hidden="true"><path d="M0 0V8L5 4Z" fill="#aab4ba" /></svg>
            )}
          </div>
        ))}
      </div>
    ))}
  </nav>
);

export default function App() {
  return (
    <div className="flex h-screen flex-col overflow-hidden bg-white">
      <header className="flex h-[171px] shrink-0 justify-between pt-1.5 pr-[83px] pl-3 font-['Open_Sans']">
        <div className="leading-[48px] text-black">
          <h1 className="text-[34px] font-bold underline decoration-4 underline-offset-4">Step #1:</h1>
          <p className="text-[35px]">Create a surface.</p>
        </div>
        <span className="pt-[70px] text-[32px] leading-10 text-[#4f4f4f]">2</span>
      </header>

      <div className="flex min-h-0 flex-1">
        <div className="mb-[109px] ml-[76px] flex min-w-0 flex-1 flex-col overflow-hidden rounded-tl-[7px] rounded-tr-[5px] border-t-2 border-l-2 border-[#26292e] bg-[#b9cde5]">
          <div className="flex h-[35px] shrink-0 items-center bg-linear-to-b from-[#98b4d6] to-[#b7cce5] pt-1 pr-[11px] pl-2.5">
            <svg viewBox="0 0 18 18" className="h-[17px] w-[17px]" aria-hidden="true">
              <path d="M1 4L4 1H17L14 4Z" fill="#d5faf8" stroke="#17383a" />
              <path d="M14 4L17 1V13L14 17Z" fill="#1c3f40" stroke="#17383a" />
              <rect x="1" y="4" width="13" height="13" fill="#5fdcd8" stroke="#17383a" />
            </svg>
            <span className="flex-1 pl-[7px] font-['Open_Sans'] text-sm text-[#16202b]">HOCKEY-STICK_BLADE (Active) - Creo Elements/Pro</span>
            <div className="flex gap-[3px]">
              <button type="button" aria-label="Minimize" className="flex h-[21px] w-[37px] items-end justify-center rounded-[3px] border border-[#56718f] bg-linear-to-b from-[#c9d9ec] from-50% to-[#9fb9d6] to-50% pb-[3px]">
                <span className="h-[6px] w-[13px] rounded-[2px] border border-[#53626f] bg-white" />
              </button>
              <button type="button" aria-label="Maximize" className="flex h-[21px] w-[37px] items-center justify-center rounded-[3px] border border-[#56718f] bg-linear-to-b from-[#c9d9ec] from-50% to-[#9fb9d6] to-50%">
                <span className="flex h-[11px] w-[13px] items-center justify-center border border-[#53626f] bg-white"><span className="h-[5px] w-[7px] border border-[#53626f] bg-[#a9c0da]" /></span>
              </button>
              <button type="button" aria-label="Close" className="flex h-[21px] w-[37px] items-center justify-center rounded-[3px] border border-[#6b2a30] bg-linear-to-b from-[#dd9a90] from-45% to-[#bf4636] to-50%">
                <svg viewBox="0 0 14 12" className="h-3 w-3.5" aria-hidden="true">
                  <path d="M2 1.500L12 10.500M12 1.500L2 10.500" stroke="#5c3a48" strokeWidth="4.600" />
                  <path d="M2.500 2L11.500 10M11.500 2L2.500 10" stroke="#fff" strokeWidth="2.800" />
                </svg>
              </button>
            </div>
          </div>

          <div className="flex min-h-0 flex-1 flex-col bg-linear-to-b from-[#b7cce5] via-[#dbe5f3] via-[110px] to-[#b9cde5] to-[111px] pr-[7px] pb-[5px] pl-[7px]">
            <div className="flex min-h-0 flex-1 flex-col bg-[#dce8f3]">
              <nav aria-label="Main menu" className="flex h-[34px] shrink-0 items-center gap-[17px] border-b border-[#c3d0da] bg-linear-to-b from-[#eff9fd] to-[#e6ecf4] pt-2 pl-[9px] font-['Liberation_Sans'] text-[15px] text-[#3f454b]">
                {["File", "Edit", "View", "Insert", "Analysis", "Info", "Applications", "Tools", "Window", "Help"].map((m) => (
                  <button key={m} type="button">{m}</button>
                ))}
              </nav>
              <div className="flex shrink-0 items-center overflow-hidden border-t border-b border-t-[#f3f8fb] border-b-[#c3d3de] bg-[#dce9f2] pt-px pb-0.5 pl-[5px]">
                <span className="mr-2 h-[68px] w-1 shrink-0 border-x border-dotted border-[#7d8b95]" />
                <div>
                  <Bar items={row1} />
                  <Bar items={row2} />
                </div>
              </div>
              <div className="flex h-[70px] shrink-0 items-end justify-between border-t border-[#f8fbfd] border-b border-b-[#c9dbe6] pl-[7px]">
                <ul className="self-start pt-[3px] font-['Liberation_Sans'] text-[13px] leading-5 text-[#40474e]">
                  {["Help is not available for this command.", "Datum planes will be displayed.", "Annotations will not be displayed."].map((m) => (
                    <li key={m} className="flex items-center gap-1.5"><span className="h-[7px] w-[7px] rounded-full bg-[#0d12e0]" />{m}</li>
                  ))}
                </ul>
                <div className="flex items-center pr-1.5 pb-px">
                  <span className="mr-[121px] flex h-8 w-[38px] items-center justify-center border-x border-[#b9cad6]">
                    <svg viewBox="0 0 14 26" className="h-[26px] w-3.5" aria-hidden="true">
                      <rect x="4" y="1.500" width="6" height="6" rx="2" fill="#e58d95" stroke="#8c5a60" />
                      <rect x="4" y="7.500" width="6" height="6" rx="2" fill="#f4ec6c" stroke="#85803c" />
                      <circle cx="7" cy="18.500" r="5.500" fill="#1fa63e" stroke="#0e5c22" />
                      <path d="M4 17.500L8 15" stroke="#bdf3c6" strokeWidth="1.500" />
                    </svg>
                  </span>
                  <label className="relative block w-[188px]">
                    <span className="sr-only">Selection filter</span>
                    <select className="h-7 w-full appearance-none rounded-[3px] border-2 border-[#8fb0c6] bg-white pl-1.5 font-['Liberation_Sans'] text-[15px] leading-5 text-[#40464b]">
                      <option>Smart</option>
                    </select>
                    <span className="pointer-events-none absolute top-3 right-1.5 flex"><Down /></span>
                  </label>
                </div>
              </div>
              <div className="flex min-h-0 flex-1">
                <ModelPanel />
                <Viewport />
                <FeatureBar />
              </div>
            </div>
          </div>
        </div>

        <div className="flex w-[175px] shrink-0 flex-col items-end justify-end pr-[34px] pb-[35px]">
          <svg viewBox="0 0 100 90" className="h-[90px] w-[100px]" role="img" aria-label="pdt">
            <ellipse cx="50" cy="45" rx="50" ry="44.500" fill="#5d5e48" />
            <circle cx="50" cy="45.500" r="40.500" fill="#fff" />
            <text x="49" y="55" textAnchor="middle" fontFamily="Open Sans" fontWeight="800" fontSize="35" fill="#5d5e48">pdt</text>
          </svg>
        </div>
      </div>
    </div>
  );
}
